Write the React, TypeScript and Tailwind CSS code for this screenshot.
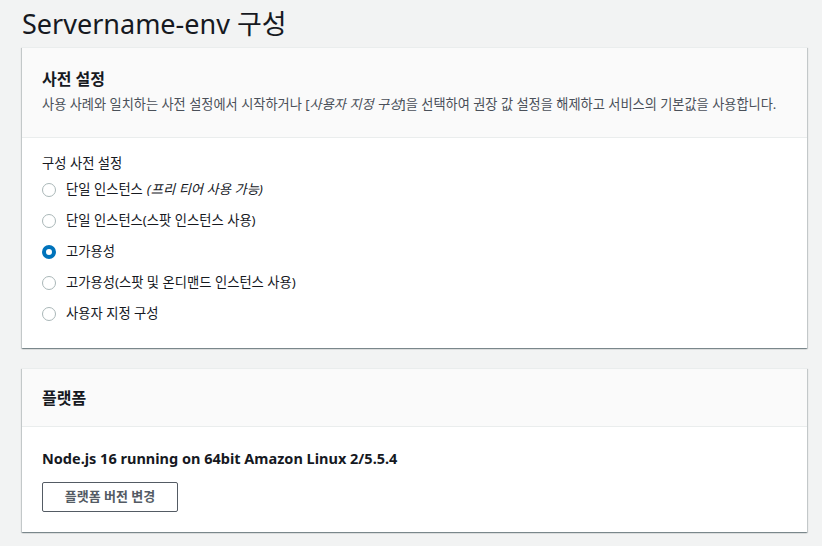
const font = { fontFamily: '"Noto Sans", "Noto Sans CJK KR", sans-serif' };

const presets = [
    { label: '단일 인스턴스', note: '(프리 티어 사용 가능)' },
    { label: '단일 인스턴스(스팟 인스턴스 사용)' },
    { label: '고가용성', checked: true },
    { label: '고가용성(스팟 및 온디맨드 인스턴스 사용)' },
    { label: '사용자 지정 구성' },
];

function Radio({ checked }: { checked?: boolean }) {
    if (checked) {
        return <span className="w-[14px] h-[14px] rounded-full border-[4px] border-[#0073bb] bg-white shrink-0" />;
    }
    return <span className="w-[14px] h-[14px] rounded-full border border-[#aab7b8] bg-white shrink-0" />;
}

export default function App() {
    return (
        <div className="w-[822px] h-[546px] bg-[#f2f3f3] text-[#16191f] pl-[22px] pr-[15px] overflow-hidden" style={font}>
            <h1 className="text-[27px] leading-[47px] font-normal">Servername-env 구성</h1>

            {/* 사전 설정 */}
            <section className="bg-white border-t border-[#eaeded] shadow-[0_1px_1px_0_rgba(0,28,36,0.3),1px_1px_1px_0_rgba(0,28,36,0.15),-1px_1px_1px_0_rgba(0,28,36,0.15)]">
                <div className="bg-[#fafafa] border-b border-[#eaeded] px-5 pt-[20px] pb-[22px]">
                    <h2 className="text-[16px] leading-[22px] font-bold">사전 설정</h2>
                    <p className="text-[13.2px] leading-[22px] text-[#4a5059] mt-[3px]">
                        사용 사례와 일치하는 사전 설정에서 시작하거나 [<i>사용자 지정 구성</i>]을 선택하여 권장 값 설정을 해제하고 서비스의 기본값을 사용합니다.
                    </p>
                </div>
                <div className="px-5 pt-[15px] pb-[19px]">
                    <div className="text-[13.3px] leading-[20px]">구성 사전 설정</div>
                    <div className="flex flex-col mt-[1px]">
                        {presets.map((p) => (
                            <label key={p.label} className="flex items-center gap-[10px] h-[31px] text-[13.3px]">
                                <Radio checked={p.checked} />
                                <span>
                                    {p.label}
                                    {p.note && <i className="ml-1">{p.note}</i>}
                                </span>
                            </label>
                        ))}
                    </div>
                </div>
            </section>

            {/* 플랫폼 */}
            <section className="mt-[20px] bg-white border-t border-[#eaeded] shadow-[0_1px_1px_0_rgba(0,28,36,0.3),1px_1px_1px_0_rgba(0,28,36,0.15),-1px_1px_1px_0_rgba(0,28,36,0.15)]">
                <div className="bg-[#fafafa] border-b border-[#eaeded] px-5 h-[58px] flex items-center">
                    <h2 className="text-[16px] leading-[22px] font-bold">플랫폼</h2>
                </div>
                <div className="px-5 pt-[20px] pb-[20px]">
                    <div className="text-[14.5px] leading-[22px] font-bold">Node.js 16 running on 64bit Amazon Linux 2/5.5.4</div>
                    <button className="mt-[13px] w-[136px] h-[30px] border border-[#545b64] rounded-[2px] bg-white text-[13px] font-bold text-[#545b64]">
                        플랫폼 버전 변경
                    </button>
                </div>
            </section>
        </div>
    );
}
